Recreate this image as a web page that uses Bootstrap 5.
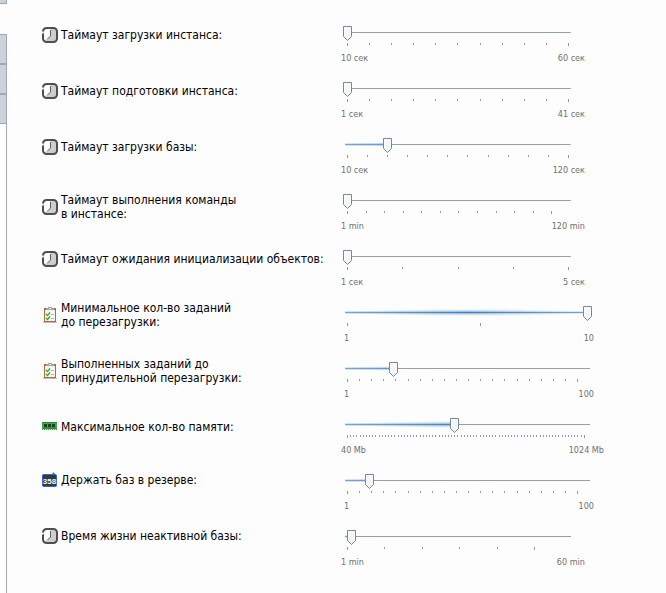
<!DOCTYPE html>
<html lang="ru">
<head>
<meta charset="utf-8">
<meta name="viewport" content="width=device-width, initial-scale=1">
<title>Настройки</title>
<link href="https://cdn.jsdelivr.net/npm/bootstrap@5.3.0/dist/css/bootstrap.min.css" rel="stylesheet">
<style>
  body { background: #fdfdfd; color: #000; font: 12px/14px "DejaVu Sans Condensed", "DejaVu Sans", sans-serif; }
  .side-tabs { width: 7px; flex: none; }
  .side-tab { height: 30px; background: #cdd1da; border: 1px solid #9da9b4; border-left: 0; }
  .side-tab-end { height: 4px; border-top: 0; margin-bottom: 30px; }
  .side-rest { border-right: 1px solid #9da9b4; }
  .settings { padding: 21px 12px 0 35px; }
  .setting { height: 56px; }
  .setting-name { width: 301px; min-height: 28px; gap: 3px; }
  .setting-name svg { width: 16px; height: 16px; flex: none; }
  .name-low { padding-top: 4px; }
  .name-high { min-height: 22px; }
  .slider { width: 230px; padding-top: 5px; flex: none; }
  .slider-wide { width: 249px; }
  .slider input {
    -webkit-appearance: none; appearance: none; display: block; width: 100%; height: 15px; margin: 0; padding: 0;
    background:
      linear-gradient(90deg, #7ba5cb, #467fb4 50%, #7ba5cb) 2px 6px / calc(100% - 4px) 1px no-repeat,
      linear-gradient(90deg, #d5e5f3, #9cc0de 50%, #e5eff8) 2px 5px / calc(100% - 4px) 3px no-repeat,
      radial-gradient(closest-side, #a0c0dd, #e2edf600) 2px 3px / calc(100% - 4px) 7px no-repeat;
  }
  .slider input::-webkit-slider-runnable-track {
    height: 15px;
    background:
      linear-gradient(#93a1ae, #93a1ae) calc(100% - 2px) 6px / calc(98% - var(--fill)) 1px no-repeat,
      linear-gradient(#fdfdfd, #fdfdfd) right / calc(100% - var(--fill)) 15px no-repeat;
  }
  .slider input::-webkit-slider-thumb {
    -webkit-appearance: none; width: 9px; height: 15px; border: 0; border-radius: 0;
    background: url("data:image/svg+xml,%3Csvg xmlns='http://www.w3.org/2000/svg' width='9' height='15'%3E%3Cpath d='M.5.5h8v10l-4 4-4-4z' fill='%23f4f5f7' stroke='%23778796'/%3E%3Cpath d='M1.5 10V1.500h6V10' fill='none' stroke='%23fff'/%3E%3C/svg%3E") no-repeat;
  }
  .ticks { height: 3px; margin: 2px 5px 6px 4px; }
  .ticks i { height: 2px; border-left: 1px solid #9297aa; flex: none; }
  .ticks .major { height: 3px; }
  .range-ends { font-size: 9px; line-height: 12px; color: #707070; margin: 0 -12px 0 -2px; }
  .ends-plain { margin: 0 -2px 0 1px; }
</style>
<script src="https://cdn.jsdelivr.net/npm/bootstrap@5.3.0/dist/js/bootstrap.bundle.min.js"></script>
</head>
<body class="d-flex min-vh-100">
<svg class="d-none" aria-hidden="true">
  <symbol id="clock" viewBox="0 0 16 16">
    <rect x="1" y="1" width="14" height="14" rx="4" fill="#cecece"/>
    <path d="M2 5a3 3 0 0 1 3-3h3.500v7L5 13H3L2 12z" fill="#fff"/>
    <path d="M1 4.500a3.500 3.500 0 0 1 3.500-3.500h7A3.500 3.500 0 0 1 15 4.500v7a3.500 3.500 0 0 1-3.500 3.500h-7A3.500 3.500 0 0 1 1 11.500V6.500" fill="none" stroke="#4f4f4f" stroke-width="2"/>
    <path d="M8.500 3v6L5 12.500" fill="none" stroke="#5c5c5c"/>
  </symbol>
  <symbol id="tasks" viewBox="0 0 16 16">
    <path d="M1 15.500h14" stroke="#bbb"/>
    <path d="M2 1h12v14H2z" fill="#b5683f"/>
    <path d="M3 3h10v11H3z" fill="#f5f5f3"/>
    <path d="M4 3V1h2V0h4v1h2v2z" fill="#a5a5a5"/><path d="M7 1h2v1H7z" fill="#eee"/>
    <path d="M4 7l1.500 1.500L8 5.500M4 11l1.500 1.500L8 9.500" fill="none" stroke="#35a52c" stroke-width="1.300"/>
    <path d="M9 7.500h3M9 11.500h3" stroke="#bbb"/>
  </symbol>
  <symbol id="memory" viewBox="0 0 16 16">
    <path d="M0 3h15v8H0z" fill="#43a74b"/><path d="M0 3h15v1H0z" fill="#2e8135"/>
    <path d="M2 5h3v3H2zM6 5h3v3H6zM10 5h3v3h-3z" fill="#263a29"/>
    <path d="M1 9h13" stroke="#2b7131"/>
    <path d="M1 10.500h13" stroke="#d6d79b" stroke-dasharray="1 1"/>
  </symbol>
  <symbol id="counter" viewBox="0 0 16 16">
    <path d="M10 2L11.500 0 13 2z" fill="#4a72dd"/>
    <rect x=".5" y="2.500" width="14" height="12" rx="1" fill="#34383f" stroke="#3b62cf"/>
    <text x="7.500" y="12" text-anchor="middle" font-family="Liberation Sans, sans-serif" font-weight="bold" font-size="8" fill="#f4f4f4">358</text>
  </symbol>
</svg>
<aside class="side-tabs d-flex flex-column">
  <div class="side-tab side-tab-end"></div>
  <div class="side-tab"></div><div class="side-tab"></div><div class="side-tab"></div>
  <div class="side-rest flex-grow-1"></div>
</aside>
<main class="settings flex-grow-1">
  <div class="setting d-flex align-items-start">
    <label class="setting-name d-flex align-items-center" for="s1"><svg><use href="#clock"/></svg><span>Таймаут загрузки инстанса:</span></label>
    <div class="slider"><input type="range" id="s1" min="10" max="60" value="10" data-step="5"><div class="ticks d-flex"></div><div class="range-ends d-flex justify-content-between"><span>10 сек</span><span>60 сек</span></div></div>
  </div>
  <div class="setting d-flex align-items-start">
    <label class="setting-name d-flex align-items-center" for="s2"><svg><use href="#clock"/></svg><span>Таймаут подготовки инстанса:</span></label>
    <div class="slider"><input type="range" id="s2" min="1" max="41" value="1" data-step="4"><div class="ticks d-flex"></div><div class="range-ends d-flex justify-content-between"><span>1 сек</span><span>41 сек</span></div></div>
  </div>
  <div class="setting d-flex align-items-start">
    <label class="setting-name d-flex align-items-center" for="s3"><svg><use href="#clock"/></svg><span>Таймаут загрузки базы:</span></label>
    <div class="slider"><input type="range" id="s3" min="10" max="120" value="30" data-step="10"><div class="ticks d-flex"></div><div class="range-ends d-flex justify-content-between"><span>10 сек</span><span>120 сек</span></div></div>
  </div>
  <div class="setting d-flex align-items-start">
    <label class="setting-name name-low d-flex align-items-center" for="s4"><svg><use href="#clock"/></svg><span>Таймаут выполнения команды<br>в инстансе:</span></label>
    <div class="slider"><input type="range" id="s4" min="1" max="120" value="1" data-step="10"><div class="ticks d-flex"></div><div class="range-ends d-flex justify-content-between"><span>1 min</span><span>120 min</span></div></div>
  </div>
  <div class="setting d-flex align-items-start">
    <label class="setting-name d-flex align-items-center" for="s5"><svg><use href="#clock"/></svg><span>Таймаут ожидания инициализации объектов:</span></label>
    <div class="slider"><input type="range" id="s5" min="1" max="5" value="1" data-step="1"><div class="ticks d-flex"></div><div class="range-ends d-flex justify-content-between"><span>1 сек</span><span>5 сек</span></div></div>
  </div>
  <div class="setting d-flex align-items-start">
    <label class="setting-name d-flex align-items-center" for="s6"><svg><use href="#tasks"/></svg><span>Минимальное кол-во заданий<br>до перезагрузки:</span></label>
    <div class="slider slider-wide"><input type="range" id="s6" min="1" max="10" value="10" data-step="5"><div class="ticks d-flex"></div><div class="range-ends ends-plain d-flex justify-content-between"><span>1</span><span>10</span></div></div>
  </div>
  <div class="setting d-flex align-items-start">
    <label class="setting-name d-flex align-items-center" for="s7"><svg><use href="#tasks"/></svg><span>Выполненных заданий до<br>принудительной перезагрузки:</span></label>
    <div class="slider slider-wide"><input type="range" id="s7" min="1" max="100" value="20" data-step="5"><div class="ticks d-flex"></div><div class="range-ends ends-plain d-flex justify-content-between"><span>1</span><span>100</span></div></div>
  </div>
  <div class="setting d-flex align-items-start">
    <label class="setting-name d-flex align-items-center" for="s8"><svg><use href="#memory"/></svg><span>Максимальное кол-во памяти:</span></label>
    <div class="slider slider-wide"><input type="range" id="s8" min="40" max="1024" value="480" data-step="13"><div class="ticks d-flex"></div><div class="range-ends d-flex justify-content-between"><span>40 Mb</span><span>1024 Mb</span></div></div>
  </div>
  <div class="setting d-flex align-items-start">
    <label class="setting-name name-high d-flex align-items-center" for="s9"><svg><use href="#counter"/></svg><span>Держать баз в резерве:</span></label>
    <div class="slider slider-wide"><input type="range" id="s9" min="1" max="100" value="10" data-step="5"><div class="ticks d-flex"></div><div class="range-ends ends-plain d-flex justify-content-between"><span>1</span><span>100</span></div></div>
  </div>
  <div class="setting d-flex align-items-start">
    <label class="setting-name name-high d-flex align-items-center" for="s10"><svg><use href="#clock"/></svg><span>Время жизни неактивной базы:</span></label>
    <div class="slider"><input type="range" id="s10" min="1" max="60" value="2" data-step="10"><div class="ticks d-flex"></div><div class="range-ends d-flex justify-content-between"><span>1 min</span><span>60 min</span></div></div>
  </div>
</main>
<script>
  document.querySelectorAll('.slider input').forEach(input => {
    const range = input.max - input.min;
    const step = +input.dataset.step;
    const count = Math.floor(range / step);
    const ticks = input.nextElementSibling;
    for (let n = 0; n <= count; n++) {
      const tick = document.createElement('i');
      tick.style.width = n < count ? step / range * 100 + '%' : '1px';
      if (n === 0 || n === count) tick.className = 'major';
      ticks.append(tick);
    }
    const paint = () => input.style.setProperty('--fill', (input.value - input.min) / range * 96 + 2 + '%');
    input.addEventListener('input', paint);
    paint();
  });
</script>
</body>
</html>
